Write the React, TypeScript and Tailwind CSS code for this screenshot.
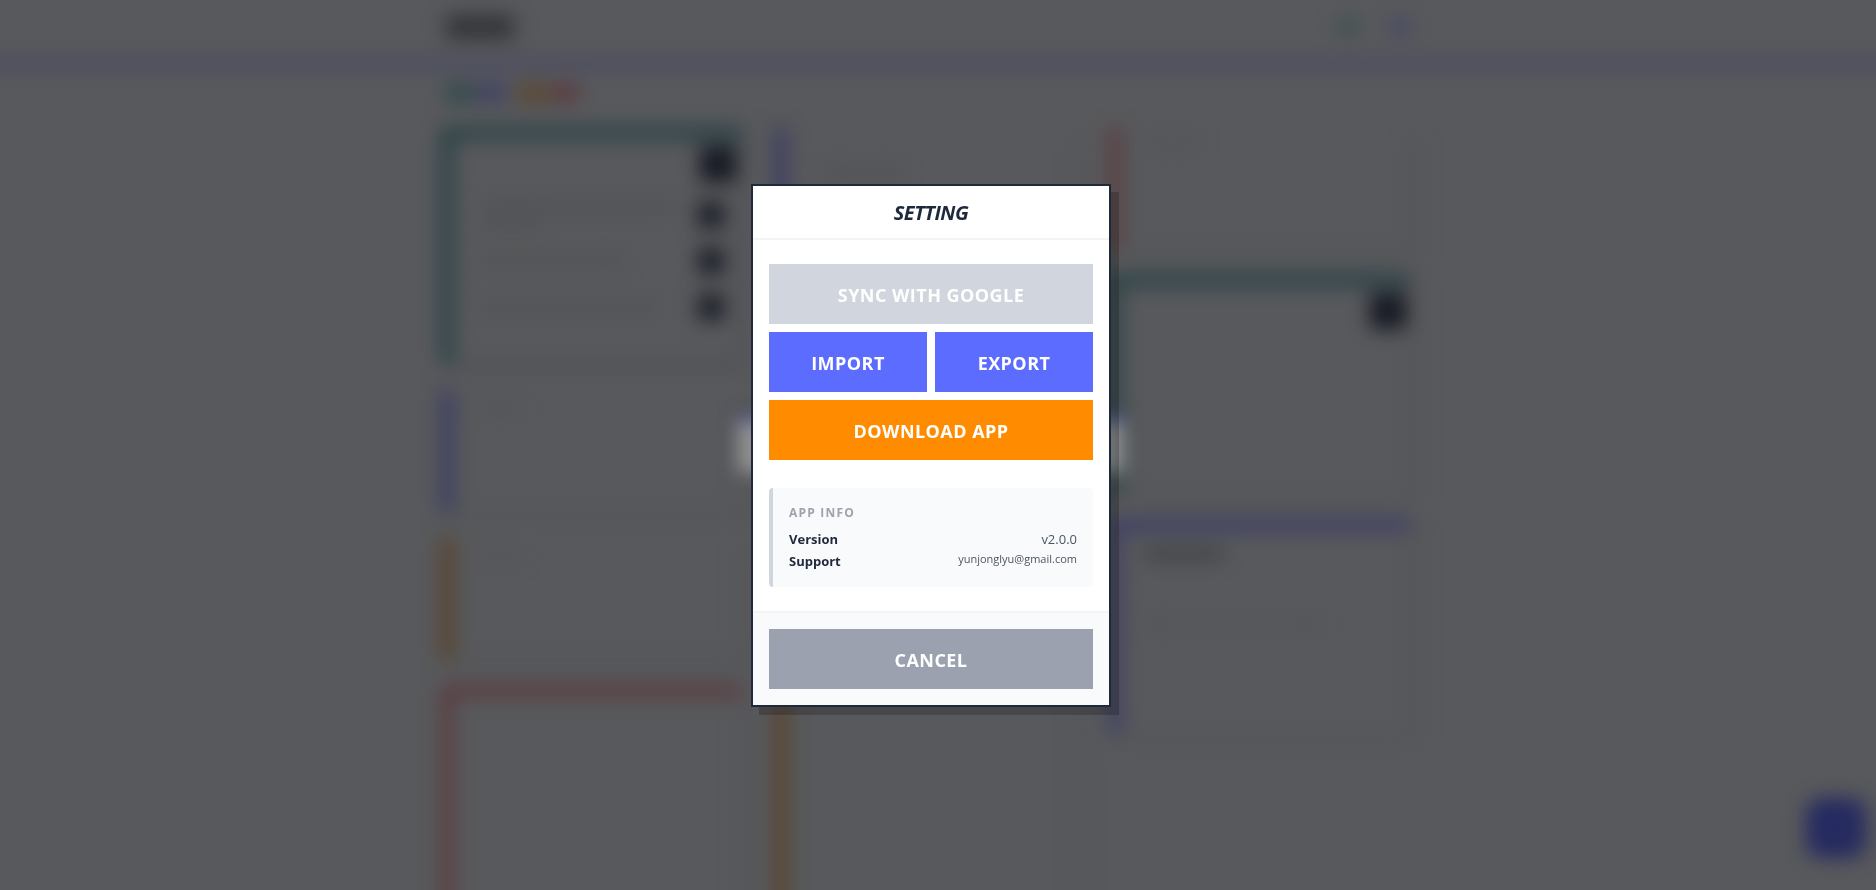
import React, { useState } from 'react';

interface NoteCardProps {
    className: string;
    children?: React.ReactNode;
}

interface ActionButtonProps {
    label: string;
    className: string;
    disabled?: boolean;
    onClick?: () => void;
}

const NoteCard: React.FC<NoteCardProps> = ({ className, children }) => (
    <article className={`w-full border-l-10 shadow-[8px_8px_0_#545558] ${className}`}>{children}</article>
);

const Line: React.FC<{ className: string }> = ({ className }) => (
    <div className={`bg-[#4f5053] ${className}`} />
);

const ActionButton: React.FC<ActionButtonProps> = ({ label, className, disabled, onClick }) => (
    <button
        type="button"
        disabled={disabled}
        onClick={onClick}
        className={`h-[60px] w-full pt-0.5 text-lg font-bold tracking-wide text-white ${className}`}
    >
        {label}
    </button>
);

// Board behind the dialog: dimmed and out of focus
const Board: React.FC = () => (
    <div className="h-screen overflow-hidden bg-[#58595c]" aria-hidden="true">
        <div className="-mx-10 blur-[10px]">
            <header className="h-[66px] border-b-4 border-[#343570] pr-4">
                <div className="mx-auto flex h-full max-w-[976px] items-center justify-between pr-2 pb-2">
                    <div className="ml-1 h-6 w-[68px] bg-[#333438]" />
                    <div className="flex gap-8">
                        <div className="h-5 w-5 rounded-full bg-[#3c504f]" />
                        <div className="h-5 w-5 rounded-full bg-[#454668]" />
                    </div>
                </div>
            </header>
            <div className="pr-4">
                <div className="mx-auto max-w-[976px] pr-2">
                    <div className="flex h-[62px] items-center gap-1 pb-2 pl-1">
                        <div className="h-4 w-7 bg-[#2a464a]" />
                        <div className="h-4 w-7 bg-[#3c3d68]" />
                        <div className="ml-2 h-4 w-8 bg-[#5d452a]" />
                        <div className="h-4 w-6 bg-[#5d343a]" />
                    </div>
                    <div className="grid grid-cols-3 items-start gap-[34px]">
                        <div className="flex flex-col gap-[26px]">
                            <NoteCard className="h-[236px] border-t-10 border-r-2 border-b-2 border-[#1c3b40] border-r-[#414d4f] border-b-[#384749]">
                                <div className="flex justify-end pt-2 pr-1">
                                    <div className="h-9 w-9 bg-[#161923]" />
                                </div>
                                <div className="flex flex-col gap-5 pt-5 pr-4 pl-8">
                                    <div className="flex items-center justify-between">
                                        <div className="flex flex-col gap-2">
                                            <Line className="h-2 w-[190px]" />
                                            <Line className="h-2 w-14" />
                                        </div>
                                        <div className="h-[26px] w-[26px] bg-[#1b1e28]" />
                                    </div>
                                    <div className="flex items-center justify-between">
                                        <Line className="h-2 w-[140px]" />
                                        <div className="h-[26px] w-[26px] bg-[#1b1e28]" />
                                    </div>
                                    <div className="flex items-center justify-between">
                                        <Line className="h-2 w-[170px]" />
                                        <div className="h-[26px] w-[26px] bg-[#1b1e28]" />
                                    </div>
                                </div>
                            </NoteCard>
                            <NoteCard className="h-[122px] border-[#333466]">
                                <Line className="mt-4 ml-6 h-1 w-12" />
                            </NoteCard>
                            <NoteCard className="h-[122px] border-[#5a3c1c]">
                                <Line className="mt-4 ml-6 h-1 w-12" />
                            </NoteCard>
                            <NoteCard className="h-[280px] border-t-10 border-[#5b3437]" />
                        </div>
                        <div className="flex flex-col gap-[26px]">
                            <NoteCard className="h-[540px] border-[#333466]">
                                <Line className="mt-10 ml-9 h-2 w-20" />
                            </NoteCard>
                            <NoteCard className="h-[280px] border-[#5a3c1c]" />
                        </div>
                        <div className="flex flex-col gap-[26px]">
                            <NoteCard className="h-[121px] border-[#5b3437]">
                                <Line className="mt-3 ml-6 h-1 w-14" />
                            </NoteCard>
                            <NoteCard className="h-[219px] border-t-10 border-[#1c3b40]">
                                <div className="flex justify-end pt-2 pr-1">
                                    <div className="h-9 w-9 bg-[#161923]" />
                                </div>
                            </NoteCard>
                            <NoteCard className="h-[214px] border-t-10 border-[#363768]">
                                <div className="mt-5 ml-6 h-2 w-20 bg-[#36373a]" />
                                <Line className="mt-16 ml-6 h-1 w-[180px]" />
                            </NoteCard>
                        </div>
                    </div>
                </div>
            </div>
        </div>
        <div className="fixed right-2.5 bottom-8 h-[60px] w-[60px] rounded-2xl bg-[#252a60] blur-[10px]" />
        <div className="fixed inset-0 flex items-center justify-center pr-3.5">
            <div className="h-[56px] w-[388px] border-t-4 border-[#3a3ea8] bg-[#909090] blur-[9px]" />
        </div>
    </div>
);

const SettingModal: React.FC<{ onClose: () => void }> = ({ onClose }) => (
    <div className="fixed inset-0 z-50 flex items-center justify-center pr-3.5">
        <section
            role="dialog"
            aria-labelledby="setting-title"
            className="w-[360px] border-2 border-[#1e293b] bg-white shadow-[8px_8px_0_rgba(0,0,0,0.2)]"
        >
            <header className="flex h-[54px] items-center justify-center border-b-2 border-gray-100">
                <h2 id="setting-title" className="pt-0.5 text-xl font-bold tracking-tight text-[#1e293b] italic">
                    SETTING
                </h2>
            </header>
            <div className="px-4 py-6">
                <div className="grid grid-cols-2 gap-2">
                    <ActionButton label="SYNC WITH GOOGLE" className="col-span-2 bg-[#d1d5dd]" disabled />
                    <ActionButton label="IMPORT" className="bg-[#5c6cff]" />
                    <ActionButton label="EXPORT" className="bg-[#5c6cff]" />
                    <ActionButton label="DOWNLOAD APP" className="col-span-2 bg-[#ff8c00]" />
                </div>
                <div className="mt-7 h-[99px] rounded-sm border-l-4 border-[#d1d5dd] bg-[#f9fafc] px-4 pt-4">
                    <h3 className="text-xs leading-[18px] font-bold tracking-widest text-[#9ca3af]">APP INFO</h3>
                    <dl className="mt-1.5 text-[13px] leading-[22px]">
                        <div className="flex justify-between">
                            <dt className="font-bold text-[#1e293b]">Version</dt>
                            <dd className="text-[#4b5563]">v2.0.0</dd>
                        </div>
                        <div className="flex justify-between">
                            <dt className="font-bold text-[#1e293b]">Support</dt>
                            <dd className="text-[11px] leading-[18px] text-[#4b5563]">yunjonglyu@gmail.com</dd>
                        </div>
                    </dl>
                </div>
            </div>
            <footer className="border-t-2 border-gray-100 bg-[#f9fafc] p-4">
                <ActionButton label="CANCEL" className="bg-[#9ba1ae]" onClick={onClose} />
            </footer>
        </section>
    </div>
);

const App: React.FC = () => {
    const [isSettingOpen, setIsSettingOpen] = useState(true);

    return (
        <main className="font-['Open_Sans','Noto_Sans',sans-serif]">
            <Board />
            {isSettingOpen && <SettingModal onClose={() => setIsSettingOpen(false)} />}
        </main>
    );
};

export default App;
